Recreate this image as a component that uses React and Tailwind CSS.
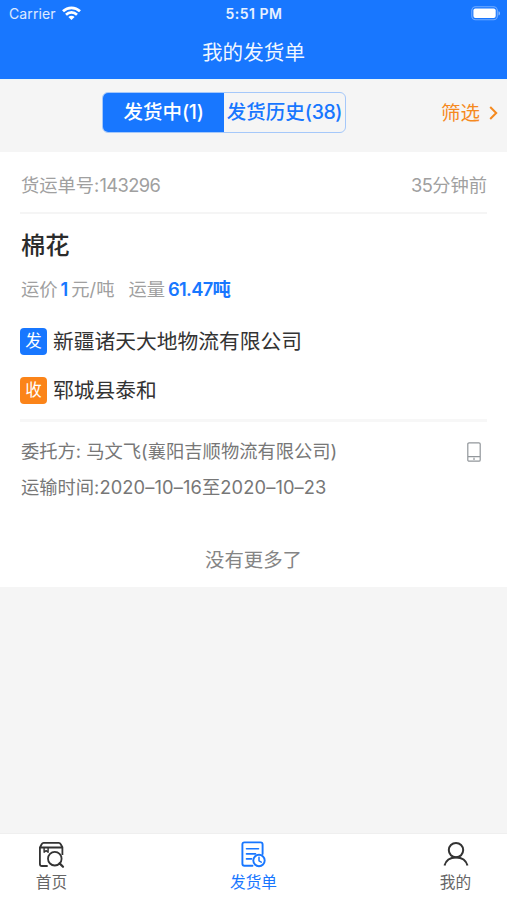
import React, { useState } from 'react';

const order = {
  number: '143296',
  createdAgo: '35分钟前',
  goods: '棉花',
  price: '1',
  amount: '61.47',
  sender: '新疆诸天大地物流有限公司',
  receiver: '郓城县泰和',
  client: '马文飞(襄阳吉顺物流有限公司)',
  startDate: '2020–10–16',
  endDate: '2020–10–23',
};

const App = () => {
  const [tab, setTab] = useState('active');

  return (
    <div className="w-full h-screen flex flex-col overflow-hidden bg-[#f5f5f5] whitespace-nowrap font-['Inter','Noto_Sans_CJK_SC',sans-serif]">
      {/* Header */}
      <header className="h-[79px] shrink-0 bg-[#1877ff] text-white">
        <div className="h-[27px] grid grid-cols-3 items-center pl-[9px] pr-[6px] text-[14px]">
          <div className="flex items-center gap-[6px] text-white/85">
            <span className="tracking-[0.1px]">Carrier</span>
            <WifiIcon />
          </div>
          <span className="-ml-[2px] text-center font-semibold tracking-[0.5px] text-white/90">5:51 PM</span>
          <BatteryIcon />
        </div>
        <h1 className="h-[52px] leading-[52px] text-center text-[20.6px] text-white/95">我的发货单</h1>
      </header>

      {/* Tabs */}
      <div className="h-[73px] shrink-0 flex items-start pt-[12px] border-t border-[#e9f6fa]">
        <div className="ml-[102px] w-[244px] h-[41px] flex rounded-[6px] border border-[#a5c8fa] overflow-hidden text-[19.5px] font-medium">
          <Tab active={tab === 'active'} onClick={() => setTab('active')} label="发货中" count="(1)" />
          <Tab active={tab === 'history'} onClick={() => setTab('history')} label="发货历史" count="(38)" />
        </div>
        <button type="button" className="ml-auto mr-[9px] h-[42px] flex items-center gap-[9px] text-[19.5px] text-[#f58a1f]">
          <span className="pt-[2px]">筛选</span>
          <svg width="9" height="14" viewBox="0 0 9 14" fill="none" stroke="currentColor" strokeWidth="2">
            <path d="M1.2 1l6 6-6 6" />
          </svg>
        </button>
      </div>

      {/* Order */}
      <main className="h-[435px] shrink-0 bg-white px-[20px]">
        <div className="h-[62px] pt-[7px] flex items-center justify-between border-b-2 border-[#f5f5f5] text-[18.3px] text-[#a0a0a0]">
          <p className="ml-[1px]">货运单号:<Num>{order.number}</Num></p>
          <p><Num>35</Num>{order.createdAgo.slice(2)}</p>
        </div>

        <h2 className="ml-[1px] mt-[13px] h-[36px] leading-[36px] text-[24.3px] font-medium text-[#2b2b2b]">{order.goods}</h2>
        <div className="ml-[1px] mt-[12px] h-[28px] leading-[28px] flex text-[18.3px] text-[#a0a0a0]">
          <p>运价<b className="mx-[3px] font-semibold text-[#1877ff]">{order.price}</b>元/吨</p>
          <p className="ml-[14px]">运量<b className="ml-[3px] font-semibold text-[#1877ff]"><span className="tracking-[-0.7px]">{order.amount}</span>吨</b></p>
        </div>

        <Company tag="发" tagClass="bg-[#1877ff]" name={order.sender} className="mt-[24px]" />
        <Company tag="收" tagClass="bg-[#fb8419]" name={order.receiver} className="mt-[21px]" />

        <div className="mt-[15px] border-t-[3px] border-[#f7f7f7] pt-[12px] text-[18.3px] text-[#777]">
          <div className="h-[35px] flex items-center justify-between">
            <p className="ml-[1px]">委托方: {order.client}</p>
            <PhoneIcon />
          </div>
          <p className="ml-[1px] h-[36px] leading-[36px]">
            运输时间:<span className="tracking-[0.12px]">{order.startDate}</span>至<span className="tracking-[0.12px]">{order.endDate}</span>
          </p>
        </div>
        <p className="mt-[39px] h-[32px] leading-[32px] text-center text-[19.4px] text-[#858585]">没有更多了</p>
      </main>

      {/* Bottom navigation */}
      <nav className="mt-auto h-[67px] shrink-0 bg-white border-t border-[#efefef] flex justify-between px-[21px] text-[15.7px] text-[#666]">
        <NavItem label="首页" icon={<HomeIcon />} />
        <NavItem label="发货单" icon={<OrderIcon />} active />
        <NavItem label="我的" icon={<UserIcon />} />
      </nav>
    </div>
  );
};

const Num = ({ children }) => <span className="tracking-[-0.6px]">{children}</span>;

const Tab = ({ active, onClick, label, count }) => (
  <button
    type="button"
    onClick={onClick}
    className={`w-1/2 h-full pt-[1px] flex items-center justify-center ${active ? 'bg-[#1877ff] text-white' : 'text-[#1877ff]'}`}
  >
    <span>{label}</span>
    <span className="tracking-[-0.4px]">{count}</span>
  </button>
);

const Company = ({ tag, tagClass, name, className }) => (
  <div className={`h-[28px] flex items-center ${className}`}>
    <span className={`w-[27px] h-[27px] rounded-[4px] flex items-center justify-center text-[16.5px] text-white ${tagClass}`}>
      {tag}
    </span>
    <span className="ml-[6px] pt-[1px] text-[20.75px] text-[#333]">{name}</span>
  </div>
);

const NavItem = ({ label, icon, active }) => (
  <button type="button" className={`w-[61px] flex flex-col items-center pt-[7px] ${active ? 'text-[#1877ff]' : ''}`}>
    {icon}
    <span className="mt-[3px] leading-[22px]">{label}</span>
  </button>
);

const WifiIcon = () => (
  <svg width="19" height="15" viewBox="0 0 19 15" fill="none" stroke="white" strokeWidth="2.7">
    <path d="M1 5.3C5.8.6 13.2.6 18 5.3" />
    <path d="M4 8.7c3.2-3 7.8-3 11 0" />
    <path d="M6.4 11c1.8-1.7 4.4-1.7 6.2 0L9.5 14z" fill="white" stroke="none" />
  </svg>
);

const BatteryIcon = () => (
  <svg className="justify-self-end" width="30" height="15" viewBox="0 0 30 15" fill="none">
    <rect x="0.8" y="0.8" width="25.5" height="13" rx="3.8" stroke="white" strokeOpacity="0.4" strokeWidth="1.1" />
    <rect x="2.4" y="2.6" width="22.3" height="9.4" rx="2" fill="white" />
    <path d="M27.5 5.2c2 .5 2 3.7 0 4.2z" fill="white" fillOpacity="0.5" />
  </svg>
);

const PhoneIcon = () => (
  <svg className="mr-[6px]" width="14" height="20" viewBox="0 0 14 20" fill="none" stroke="#92979b" strokeWidth="1.2">
    <rect x="0.8" y="0.8" width="12.4" height="18.4" rx="1.3" />
    <path d="M1 14.6h12M7 15.7v2.2" />
  </svg>
);

const HomeIcon = () => (
  <svg width="28" height="28" viewBox="0.8 0 28 28" fill="none" stroke="#333" strokeWidth="1.8" strokeLinejoin="round">
    <path d="M10.5 25H4.8c-1.4 0-2.1-.8-2.1-2.1V6.5L4.6 3c.4-.8 1-1.1 1.8-1.1h15.2c.8 0 1.4.3 1.8 1.1l1.8 3.3V14M2.7 6.5h22.5" />
    <path d="M6.9 6.5v4.7l2-1.6 2 1.6V6.5" strokeWidth="1.4" />
    <circle cx="17.6" cy="17.7" r="6.8" />
    <path d="M22.4 22.4l3.4 3.4" strokeWidth="2.2" strokeLinecap="round" />
  </svg>
);

const OrderIcon = () => (
  <svg width="28" height="28" viewBox="0.5 0.5 28 28" fill="none" stroke="currentColor" strokeWidth="1.9" strokeLinecap="round" strokeLinejoin="round">
    <path d="M13 25.2H4.9c-1.3 0-2-.7-2-2V3.9c0-1.2.7-2 2-2h16.2c1.3 0 2 .8 2 2v9.7" />
    <path d="M7 8.3h12M7 13.4h9M7 18.4h5" strokeWidth="1.6" />
    <circle cx="19.5" cy="20" r="5.7" />
    <path d="M19.5 16.8v3.5l2.3 1.4" strokeWidth="1.5" />
  </svg>
);

const UserIcon = () => (
  <svg width="28" height="28" viewBox="0 0.5 28 28" fill="none" stroke="#333" strokeWidth="2">
    <circle cx="14" cy="9.6" r="7.2" />
    <path d="M2.5 25c1.3-5 5.7-8.1 11.5-8.1S24.2 20 25.5 25" />
  </svg>
);

export default App;
